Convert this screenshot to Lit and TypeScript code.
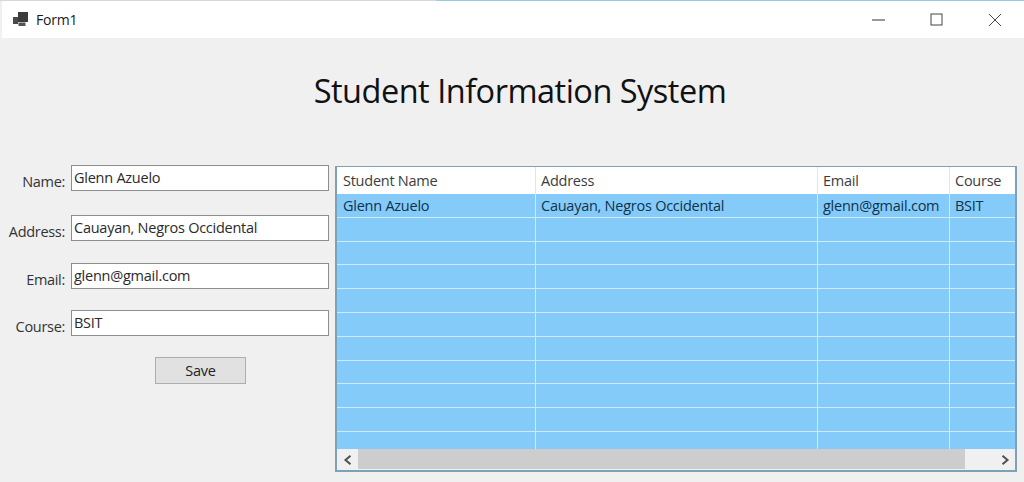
import { LitElement, html, css, svg } from 'lit';
import { customElement } from 'lit/decorators.js';

const fields = [
  { label: 'Name:', value: 'Glenn Azuelo' },
  { label: 'Address:', value: 'Cauayan, Negros Occidental' },
  { label: 'Email:', value: 'glenn@gmail.com' },
  { label: 'Course:', value: 'BSIT' },
];

const columns = ['Student Name', 'Address', 'Email', 'Course'];
const first = ['Glenn Azuelo', 'Cauayan, Negros Occidental', 'glenn@gmail.com', 'BSIT'];
const rows = [first, ...Array.from({ length: 10 }, () => ['', '', '', ''])];

const chevron = (d: string) => html`<svg width="10" height="10" viewBox="0 0 10 10">
  ${svg`<path d=${d} fill="none" stroke="#505050" stroke-width="2"/>`}
</svg>`;

@customElement('app-root')
export class AppRoot extends LitElement {
  static styles = css`
    :host {
      display: block;
      width: 1024px;
      height: 482px;
      overflow: hidden;
      background: #f0f0f0;
      font-family: 'Open Sans', 'Noto Sans', sans-serif;
      color: #1a1a1a;
    }

    .strip {
      height: 1px;
      background: linear-gradient(90deg, #d8d8d8 0, #d8d8d8 436px, #9cc9e2 436px);
    }

    .titlebar {
      height: 37px;
      margin-left: 2px;
      background: #fff;
      display: flex;
      align-items: center;
      font-size: 14px;
      letter-spacing: -0.2px;
    }

    .appicon {
      margin: 0 7px 0 11px;
    }

    .name {
      flex: 1;
    }

    .winbtn {
      width: 58px;
      display: flex;
      justify-content: center;
    }

    h1 {
      margin: 32px 0 0;
      height: 42px;
      padding-left: 16px;
      text-align: center;
      font-size: 32.5px;
      line-height: 42px;
      font-weight: 400;
      color: #111;
      letter-spacing: -0.5px;
    }

    .main {
      display: flex;
      margin-top: 53px;
    }

    .form {
      width: 335px;
      flex: none;
    }

    .field {
      display: flex;
      align-items: center;
      height: 26px;
    }

    .field:nth-child(2) {
      margin-top: 24px;
    }

    .field:nth-child(3) {
      margin-top: 22px;
    }

    .field:nth-child(4) {
      margin-top: 21px;
    }

    .field label {
      width: 65px;
      margin-right: 6px;
      margin-top: 7px;
      text-align: right;
      font-size: 14.5px;
      letter-spacing: -0.3px;
      color: #333;
    }

    .input {
      width: 258px;
      height: 26px;
      box-sizing: border-box;
      border: 1px solid #8e8e8e;
      background: #fff;
      padding: 0 2px;
      font-size: 14.5px;
      line-height: 24px;
      letter-spacing: -0.25px;
      color: #2a2a2a;
    }

    .save {
      display: block;
      width: 91px;
      height: 27px;
      box-sizing: border-box;
      margin: 21px 0 0 155px;
      padding: 0;
      border: 1px solid #adadad;
      background: #e1e1e1;
      font: inherit;
      font-size: 14.5px;
      letter-spacing: -0.25px;
      color: #222;
    }

    .grid {
      width: 682px;
      height: 306px;
      margin-top: 1px;
      box-sizing: border-box;
      border: 2px solid #7da2b5;
      border-width: 1px 2px 2px 2px;
      background: #85cbfa;
      display: flex;
      flex-direction: column;
      font-size: 14.5px;
      letter-spacing: -0.25px;
    }

    .row {
      display: grid;
      grid-template-columns: 199px 282px 132px 1fr;
      height: 23.8px;
      box-sizing: border-box;
      border-bottom: 1px solid #d0eafc;
    }

    .row.head {
      height: 27px;
      background: #fff;
      border-bottom: none;
      color: #3c3c3c;
    }

    .cell {
      padding-left: 5px;
      border-right: 1px solid #d0eafc;
      line-height: 23px;
      white-space: nowrap;
      overflow: hidden;
      color: #10324a;
    }

    .cell:first-child {
      padding-left: 6px;
    }

    .head .cell {
      line-height: 27px;
      border-right-color: #e4e4e4;
      color: #3c3c3c;
    }

    .cell:last-child {
      border-right: none;
    }

    .rows {
      flex: 1;
      min-height: 0;
      overflow: hidden;
    }

    .scroll {
      height: 21px;
      flex: none;
      display: flex;
      align-items: center;
      background: #f0f0f0;
    }

    .arrow {
      width: 21px;
      height: 21px;
      display: flex;
      align-items: center;
      justify-content: center;
      flex: none;
    }

    .track {
      flex: 1;
      height: 20px;
      align-self: flex-start;
      display: flex;
    }

    .thumb {
      width: 607px;
      background: #cdcdcd;
    }
  `;

  render() {
    return html`
      <div class="strip"></div>
      <div class="titlebar">
        <svg class="appicon" width="16" height="16" viewBox="0 0 16 16">
          <rect x="0" y="5" width="5" height="7" fill="#4a4a4a" />
          <rect x="5" y="0" width="10" height="10" fill="#3c3c3c" />
          <rect x="5.5" y="10.5" width="7" height="3.5" fill="#555" />
        </svg>
        <span class="name">Form1</span>
        <div class="winbtn">
          <svg width="14" height="14" viewBox="0 0 14 14"><path d="M0 7H13" stroke="#333" stroke-width="1" /></svg>
        </div>
        <div class="winbtn">
          <svg width="14" height="14" viewBox="0 0 14 14"><rect x="1" y="1" width="11" height="11" fill="none" stroke="#444" stroke-width="1" /></svg>
        </div>
        <div class="winbtn">
          <svg width="14" height="14" viewBox="0 0 14 14"><path d="M1 1L13 13M13 1L1 13" stroke="#444" stroke-width="1" /></svg>
        </div>
      </div>
      <h1>Student Information System</h1>
      <div class="main">
        <div class="form">
          ${fields.map(
            (f) => html`<div class="field">
              <label>${f.label}</label>
              <div class="input">${f.value}</div>
            </div>`
          )}
          <button class="save">Save</button>
        </div>
        <div class="grid">
          <div class="row head">${columns.map((c) => html`<div class="cell">${c}</div>`)}</div>
          <div class="rows">
            ${rows.map((r) => html`<div class="row">${r.map((c) => html`<div class="cell">${c}</div>`)}</div>`)}
          </div>
          <div class="scroll">
            <div class="arrow">${chevron('M7.5 0.8L2.5 5L7.5 9.2')}</div>
            <div class="track"><div class="thumb"></div></div>
            <div class="arrow">${chevron('M2.5 0.8L7.5 5L2.5 9.2')}</div>
          </div>
        </div>
      </div>
    `;
  }
}
